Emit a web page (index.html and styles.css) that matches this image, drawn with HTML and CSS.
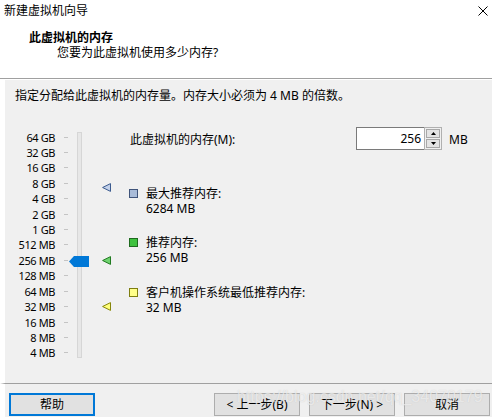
FILE: index.html
```html
<!DOCTYPE html>
<html lang="zh-CN">
<head>
<meta charset="utf-8">
<title>新建虚拟机向导</title>
<link rel="stylesheet" href="styles.css">
</head>
<body>
<div class="window">
  <div class="header">
    <div class="titlebar">
      <span class="title">新建虚拟机向导</span>
      <svg class="close" width="10" height="10" viewBox="0 0 10 10"><path d="M0.5 0.5 L9.5 9.5 M9.5 0.5 L0.5 9.5" stroke="#000" stroke-width="1" fill="none"/></svg>
    </div>
    <div class="htitle">此虚拟机的内存</div>
    <div class="hsub">您要为此虚拟机使用多少内存?</div>
  </div>
  <div class="body">
    <p class="instr">指定分配给此虚拟机的内存量。内存大小必须为 4 MB 的倍数。</p>
    <div class="main">
      <div class="scale">
        <span class="lbl">64 GB</span><span class="tick"></span>
        <span class="lbl">32 GB</span><span class="tick"></span>
        <span class="lbl">16 GB</span><span class="tick"></span>
        <span class="lbl">8 GB</span><span class="tick"></span>
        <span class="lbl">4 GB</span><span class="tick"></span>
        <span class="lbl">2 GB</span><span class="tick"></span>
        <span class="lbl">1 GB</span><span class="tick"></span>
        <span class="lbl">512 MB</span><span class="tick"></span>
        <span class="lbl">256 MB</span><span class="tick"></span>
        <span class="lbl">128 MB</span><span class="tick"></span>
        <span class="lbl">64 MB</span><span class="tick"></span>
        <span class="lbl">32 MB</span><span class="tick"></span>
        <span class="lbl">16 MB</span><span class="tick"></span>
        <span class="lbl">8 MB</span><span class="tick"></span>
        <span class="lbl">4 MB</span><span class="tick"></span>
        <div class="track">
          <svg class="thumb" style="top:123px" width="20" height="11" viewBox="0 0 20 11"><polygon points="0,5.5 5,0 20,0 20,11 5,11" fill="#0078d7"/></svg>
        </div>
      </div>
      <div class="markers">
        <svg class="mark" style="top:56px" width="9" height="9" viewBox="0 0 9 9"><polygon points="0.6,4.5 8.5,0.6 8.5,8.4" fill="#c3d1ea" stroke="#3b5a8e" stroke-width="1"/></svg>
        <svg class="mark" style="top:129px" width="9" height="9" viewBox="0 0 9 9"><polygon points="0.6,4.5 8.5,0.6 8.5,8.4" fill="#6fd36f" stroke="#217a21" stroke-width="1"/></svg>
        <svg class="mark" style="top:175px" width="9" height="9" viewBox="0 0 9 9"><polygon points="0.6,4.5 8.5,0.6 8.5,8.4" fill="#ffff7a" stroke="#85850a" stroke-width="1"/></svg>
      </div>
      <div class="right">
        <div class="memrow">
          <span class="memlabel">此虚拟机的内存(M):</span>
          <div class="spin">
            <div class="field">256</div>
            <div class="spinbtns">
              <div class="sbtn"><svg width="5" height="3" viewBox="0 0 5 3"><polygon points="2.5,0 5,3 0,3" fill="#000"/></svg></div>
              <div class="sbtn"><svg width="5" height="3" viewBox="0 0 5 3"><polygon points="0,0 5,0 2.5,3" fill="#000"/></svg></div>
            </div>
          </div>
          <span class="unit">MB</span>
        </div>
        <div class="legend">
          <div class="item">
            <span class="sq sq-blue"></span>
            <div class="itext"><div>最大推荐内存:</div><div>6284 MB</div></div>
          </div>
          <div class="item">
            <span class="sq sq-green"></span>
            <div class="itext"><div>推荐内存:</div><div>256 MB</div></div>
          </div>
          <div class="item">
            <span class="sq sq-yellow"></span>
            <div class="itext"><div>客户机操作系统最低推荐内存:</div><div>32 MB</div></div>
          </div>
        </div>
      </div>
    </div>
  </div>
  <div class="footer">
    <button class="btn btn-default">帮助</button>
    <div class="navbtns">
      <button class="btn">&lt; 上一步(B)</button>
      <button class="btn">下一步(N) &gt;</button>
      <button class="btn">取消</button>
    </div>
    <div class="watermark">https://blog.csdn.net/qq_34070179</div>
  </div>
</div>
</body>
</html>
```

FILE: styles.css
```css
* { box-sizing: border-box; }
html, body { margin: 0; padding: 0; }
body {
  width: 492px;
  height: 417px;
  overflow: hidden;
  font-family: "Noto Sans", "Noto Sans CJK SC", sans-serif;
  font-size: 12px;
  line-height: 15px;
  color: #000;
  background: #fff;
}
.window {
  width: 492px;
  height: 417px;
  display: flex;
  flex-direction: column;
  position: relative;
}
.header {
  height: 79px;
  background: #fff;
  border-bottom: 1px solid #a0a0a0;
  flex: none;
}
.titlebar {
  height: 21px;
  display: flex;
  align-items: center;
  justify-content: space-between;
  padding: 0 4px 0 4px;
}
.title { line-height: 21px; }
.close { display: block; }
.htitle {
  margin-top: 9px;
  padding-left: 29px;
  font-weight: bold;
}
.hsub {
  padding-left: 57px;
}
.body {
  flex: 1;
  background: #f0f0f0;
  border-left: 5px solid #fff;
  border-top: 1px solid #fff;
  display: flex;
  flex-direction: column;
}
.instr {
  margin: 0;
  padding: 8px 0 0 10px;
}
.main {
  margin-top: 24px;
  display: flex;
  align-items: flex-start;
}
.scale {
  margin-top: 2.3px;
  display: grid;
  grid-template-columns: 50px 22px 5px;
  grid-template-rows: repeat(15, 15.43px);
  flex: none;
}
.lbl {
  grid-column: 1;
  display: flex;
  align-items: center;
  justify-content: flex-end;
  font-size: 11px;
  letter-spacing: -0.4px;
  white-space: nowrap;
}
.tick {
  grid-column: 2;
  align-self: center;
  margin-left: 9px;
  width: 4px;
  height: 1px;
  background: #c4c4c4;
}
.track {
  grid-column: 3;
  grid-row: 1 / -1;
  margin: 3px 0;
  border: 1px solid #d6d6d6;
  background: #e7e7e7;
  position: relative;
}
.thumb {
  position: absolute;
  left: -9px;
  display: block;
}
.markers {
  position: relative;
  width: 47px;
  align-self: stretch;
  flex: none;
}
.mark {
  position: absolute;
  left: 20px;
  display: block;
}
.right {
  flex: 1;
  display: flex;
  flex-direction: column;
}
.memrow {
  height: 23px;
  display: flex;
  align-items: center;
}
.memlabel {
  padding-left: 1px;
  padding-top: 2px;
}
.spin {
  margin-left: auto;
  display: flex;
  width: 86px;
  height: 23px;
}
.field {
  width: 68px;
  height: 23px;
  background: #fff;
  border: 1px solid #7a7a7a;
  border-right: none;
  text-align: right;
  padding-right: 3px;
  line-height: 21px;
}
.spinbtns {
  width: 18px;
  height: 23px;
  border: 1px solid #b0b0b0;
  background: #f0f0f0;
  display: flex;
  flex-direction: column;
  padding: 1px;
  gap: 1px;
}
.sbtn {
  flex: 1;
  border: 1px solid #a8a8a8;
  background: #e4e4e4;
  display: flex;
  align-items: center;
  justify-content: center;
}
.sbtn svg { display: block; }
.unit {
  width: 50px;
  padding-left: 7px;
  padding-top: 1px;
}
.legend {
  margin-top: 35.5px;
  display: flex;
  flex-direction: column;
  gap: 19.5px;
}
.item {
  display: flex;
  align-items: flex-start;
}
.sq {
  width: 9px;
  height: 9px;
  margin-top: 3px;
  margin-right: 8px;
  flex: none;
  border: 1px solid;
}
.sq-blue { background: #a9bcd9; border-color: #3f547a; }
.sq-green { background: #3fc23f; border-color: #1f6a1f; }
.sq-yellow { background: #ffff8a; border-color: #7e7e10; }
.footer {
  height: 34px;
  flex: none;
  background: #f0f0f0;
  border-top: 1px solid #a0a0a0;
  border-left: 5px solid #fff;
  display: flex;
  align-items: flex-start;
  padding: 9px 2px 0 4px;
  position: relative;
}
.btn {
  width: 86px;
  height: 23px;
  margin: 0;
  padding: 0;
  font-family: "Noto Sans", "Noto Sans CJK SC", sans-serif;
  font-size: 12px;
  line-height: 15px;
  color: #000;
  background: #e1e1e1;
  border: 1px solid #adadad;
  border-radius: 0;
}
.btn-default {
  border: 2px solid #0078d7;
}
.navbtns {
  margin-left: auto;
  display: flex;
  gap: 9px;
}
.watermark {
  position: absolute;
  left: 232px;
  top: 3px;
  font-family: "Liberation Sans", sans-serif;
  font-size: 16px;
  line-height: 20px;
  color: rgba(255, 255, 255, 0.6);
  text-shadow: 0 0 1px rgba(150, 150, 150, 0.4);
  pointer-events: none;
  white-space: nowrap;
}
```
